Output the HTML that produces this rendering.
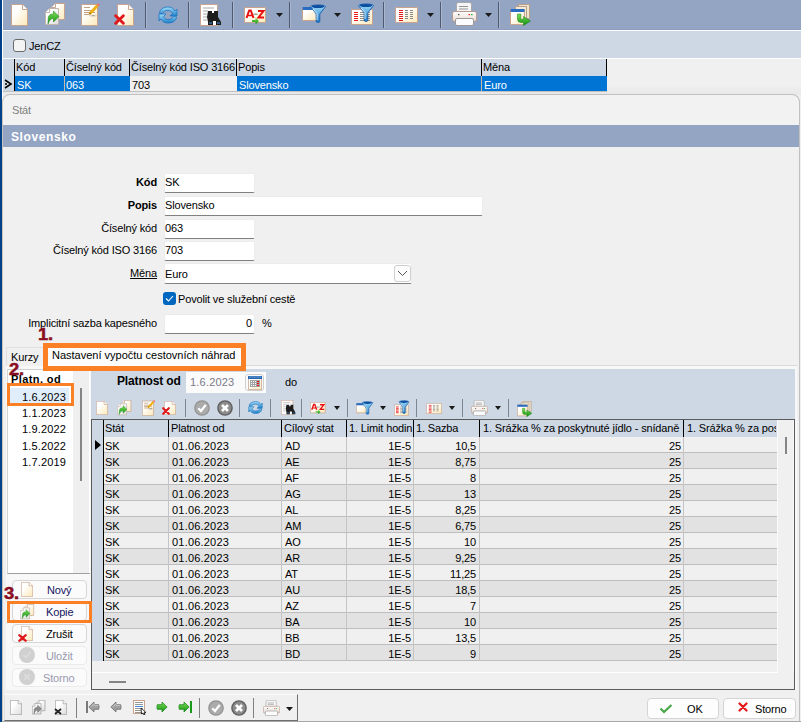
<!DOCTYPE html>
<html><head><meta charset="utf-8">
<style>
*{box-sizing:border-box;margin:0;padding:0}
html,body{width:801px;height:722px;overflow:hidden;background:#f0f0f0;font-family:"Liberation Sans",sans-serif;font-size:11px;color:#000}
.a{position:absolute}
.inp{height:20px;background:#fff;border:1px solid #ececec;border-bottom:1px solid #808080;border-radius:2px}
.btn{left:12px;width:75px;height:19px;border:1px solid #d6d6d6;border-radius:4px;background:#fbfbfb}
.num{font-weight:bold;font-size:17px;line-height:16px;color:#8a0d22;-webkit-text-stroke:0.5px #8a0d22;letter-spacing:0.3px;transform:scaleX(1.08);transform-origin:0 0}
.t{position:absolute;white-space:nowrap;line-height:13px;letter-spacing:-0.15px}
</style></head><body>
<!-- left strip -->
<div class="a" style="left:0;top:0;width:2px;height:722px;background:#00428a"></div>
<div class="a" style="left:2px;top:0;width:1px;height:722px;background:#fff"></div>
<!-- top toolbar -->
<div class="a" style="left:3px;top:0;width:798px;height:30px;background:#94a5c4;border-bottom:1px solid #8b9cbc"></div>
<div class="a" style="left:3px;top:30px;width:798px;height:1px;background:#fff"></div>
<!-- filter bar -->
<div class="a" style="left:3px;top:31px;width:798px;height:27px;background:#ced8e4"></div>
<div class="a" style="left:3px;top:58px;width:798px;height:1px;background:#fff"></div>

<svg width="0" height="0" style="position:absolute">
<defs>
<linearGradient id="pg" x1="0" y1="0" x2="1" y2="1"><stop offset="0.3" stop-color="#ffffff"/><stop offset="1" stop-color="#fde9b8"/></linearGradient>
<linearGradient id="pgg" x1="0" y1="0" x2="1" y2="1"><stop offset="0.3" stop-color="#ffffff"/><stop offset="1" stop-color="#dcdcdc"/></linearGradient>
<linearGradient id="blu" x1="0" y1="0" x2="0" y2="1"><stop offset="0" stop-color="#9fdcf8"/><stop offset="1" stop-color="#1f7fc8"/></linearGradient>
<linearGradient id="grn" x1="0" y1="0" x2="0" y2="1"><stop offset="0" stop-color="#7ee05a"/><stop offset="1" stop-color="#109010"/></linearGradient>
<symbol id="page" viewBox="0 0 17 22"><path d="M0.5 0.5H11.5L16.5 5.5V21.5H0.5Z" fill="url(#pg)" stroke="#c8a48e"/><path d="M11.5 0.5V5.5H16.5" fill="#fff" stroke="#c8a48e"/></symbol>
<symbol id="pagegr" viewBox="0 0 17 22"><path d="M0.5 0.5H11.5L16.5 5.5V21.5H0.5Z" fill="url(#pgg)" stroke="#9a9a9a"/><path d="M11.5 0.5V5.5H16.5" fill="#fff" stroke="#9a9a9a"/></symbol>
<symbol id="redx" viewBox="0 0 10 10"><path d="M1.5 1.5L8.5 8.5M8.5 1.5L1.5 8.5" stroke="#e0181c" stroke-width="2.6" stroke-linecap="round"/></symbol>
<symbol id="copyic" viewBox="0 0 21 23"><path d="M6.5 4.5L10.5 0.5H19.5V16.5H6.5Z" fill="url(#pg)" stroke="#c8a48e"/><path d="M10.5 0.5V4.5H6.5" fill="#fff" stroke="#c8a48e"/><path d="M0.5 9.5L4.5 5.5H13.5V21.5H0.5Z" fill="url(#pgg)" stroke="#c4b4aa"/><path d="M4.5 5.5V9.5H0.5" fill="#fff" stroke="#c4b4aa"/><path d="M3 21L3.3 14.5C3.8 12 5.5 11 8.5 11V8L14 13.5L8.5 19V15.5C6 15.5 4.5 17 3 21Z" fill="url(#grn)" stroke="#0d7d0d" stroke-width="0.5"/></symbol>
<symbol id="chk" viewBox="0 0 16 16"><circle cx="8" cy="8" r="7.8" fill="#909090"/><circle cx="8" cy="8" r="6.6" fill="#ababab"/><path d="M4.3 8.3L7 11L11.8 4.8" fill="none" stroke="#fff" stroke-width="2.2"/></symbol>
<symbol id="xci" viewBox="0 0 16 16"><circle cx="8" cy="8" r="7.8" fill="#5e5e5e"/><circle cx="8" cy="8" r="6.4" fill="#8c8c8c"/><path d="M5 5L11 11M11 5L5 11" stroke="#fff" stroke-width="2.6"/></symbol>
<symbol id="binoc" viewBox="0 0 22 22"><path d="M0.5 0.5H17.5V21.5H0.5Z" fill="#fff" stroke="#c8a48e"/><path d="M3 4H14M3 7H8M3 10H7M3 13H7M3 16H7" stroke="#aaa" stroke-width="1"/><path d="M8 7H12V9H14V7H18V13L21 18V21H16V17H13V21H8V18L7 13Z" fill="#1c1c1c"/><path d="M9 19H12M17 19H20" stroke="#3a6aa0" stroke-width="1.5"/></symbol>
<symbol id="az" viewBox="0 0 24 17"><path d="M0.5 0.5H21.5V15.5H0.5Z" fill="url(#pg)" stroke="#c8a48e"/><path d="M2.5 11L5.2 3.5H6.8L9.5 11" fill="none" stroke="#e81010" stroke-width="2"/><path d="M4 8.5H8" stroke="#e81010" stroke-width="1.5"/><path d="M9.5 7.2H13.5" stroke="#8a8a8a" stroke-width="1.2"/><path d="M14 4H19.5L14.5 10.5H20" fill="none" stroke="#e81010" stroke-width="2"/><path d="M8 13H11.5V10.5L15 14L11.5 17.5V15H8Z" fill="url(#grn)"/></symbol>
<symbol id="filt1" viewBox="0 0 25 21"><path d="M0.5 3.5H14.5V16.5H0.5Z" fill="url(#pg)" stroke="#c8a48e"/><path d="M0.5 3H14.5V6H0.5Z" fill="#2a6cc0"/><g transform="translate(8 0)"><path d="M0.5 2.5C0.5 0.5 15.5 0.5 15.5 2.5L9.8 10V17.8Q8 19.3 6.2 17.8V10Z" fill="url(#blu)" stroke="#1858a8" stroke-width="0.9"/><ellipse cx="8" cy="2.5" rx="6.3" ry="1.6" fill="#0c4ea0"/><path d="M3 5L7 9.5V16" stroke="#e8f8ff" stroke-width="1" fill="none" opacity="0.8"/></g></symbol>
<symbol id="filt2" viewBox="0 0 24 22"><path d="M0.5 6.5H21.5V21.5H0.5Z" fill="url(#pg)" stroke="#c8a48e"/><path d="M3 9.5H7M3 11.5H7M3 13.5H7M3 15.5H7M3 17.5H7" stroke="#f01818" stroke-width="1.2"/><path d="M9 9.5H19M9 11.5H19M9 13.5H19M9 15.5H19M9 17.5H19" stroke="#909090" stroke-width="1"/><g transform="translate(7 0)"><path d="M0.5 2.5C0.5 0.5 15.5 0.5 15.5 2.5L9.8 10V17.8Q8 19.3 6.2 17.8V10Z" fill="url(#blu)" stroke="#1858a8" stroke-width="0.9"/><ellipse cx="8" cy="2.5" rx="6.3" ry="1.6" fill="#0c4ea0"/><path d="M3 5L7 9.5V16" stroke="#e8f8ff" stroke-width="1" fill="none" opacity="0.8"/></g></symbol>
<symbol id="cols" viewBox="0 0 23 16"><path d="M0.5 0.5H22.5V15.5H0.5Z" fill="url(#pg)" stroke="#c8a48e"/><path d="M4 3.5H8M4 5.5H8M4 7.5H8M4 9.5H8M4 11.5H8M4 13.5H8" stroke="#e01818" stroke-width="1"/><path d="M10 3.5H13M10 5.5H13M10 7.5H13M10 9.5H13M10 11.5H13M15 3.5H18M15 5.5H18M15 7.5H18M15 9.5H18M15 11.5H18" stroke="#888" stroke-width="1"/></symbol>
<symbol id="prn" viewBox="0 0 25 24"><linearGradient id="prb" x1="0" y1="0" x2="0" y2="1"><stop offset="0" stop-color="#ffffff"/><stop offset="1" stop-color="#e6d8ce"/></linearGradient><path d="M4.5 10V2.5Q4.5 0.5 6.5 0.5H17.5Q19.5 0.5 19.5 2.5V10Z" fill="#f6f6f6" stroke="#a8a8a8"/><path d="M7 4.5H16M7 7H16" stroke="#8a8a8a" stroke-width="0.9"/><rect x="0.5" y="9.5" width="24" height="10" rx="2" fill="url(#prb)" stroke="#b8988a"/><rect x="3.5" y="16.5" width="18" height="7" rx="1.5" fill="#fcfcfc" stroke="#9a9a9a"/><rect x="6" y="12" width="1.5" height="1.2" fill="#555"/><rect x="16.5" y="12" width="1.6" height="1.2" fill="#e03030"/><rect x="19" y="12" width="1.6" height="1.2" fill="#20c040"/></symbol>
<symbol id="win" viewBox="0 0 22 22"><path d="M8.5 0.5H19.5V14.5H8.5Z" fill="#efe4d0" stroke="#b8a088"/><path d="M5.5 2.5H16.5V16.5H5.5Z" fill="#f4ead8" stroke="#b8a088"/><path d="M0.5 5.5H14.5V20.5H0.5Z" fill="url(#pg)" stroke="#c8a48e"/><path d="M0.5 5H14.5V8H0.5Z" fill="#2a6cc0"/><path d="M7.5 10V15Q7.5 18.5 11 18.5H13.5V21.5L20.5 17L13.5 12.5V15.3H11.5Q10.8 15.3 10.8 14.5V10Z" fill="url(#grn)" stroke="#0e7e0e" stroke-width="0.5"/></symbol>
<symbol id="refr" viewBox="0 0 20 20"><path d="M1.5 8C2 4 5.5 2 10 2C14 2 16 4 17 6L19 4V11H12L14.5 8.5C13.5 6.5 12 5.5 10 5.5C7 5.5 5 7 4 9Z" fill="url(#blu)" stroke="#1c74c0" stroke-width="0.8"/><path d="M18.5 12C18 16 14.5 18 10 18C6 18 4 16 3 14L1 16V9H8L5.5 11.5C6.5 13.5 8 14.5 10 14.5C13 14.5 15 13 16 11Z" fill="url(#blu)" stroke="#1c74c0" stroke-width="0.8"/></symbol>
<symbol id="edit" viewBox="0 0 20 23"><path d="M0.5 1.5H16.5V22.5H0.5Z" fill="url(#pg)" stroke="#c8a48e"/><path d="M3 4.5H9M3 7.5H14M3 9.5H14M3 11.5H8" stroke="#c0a080" stroke-width="1.2"/><path d="M8 12.5L13 13.5L15.5 12" stroke="#d8d0c8" stroke-width="1.5" opacity="0.7"/><path d="M8.5 11L16.5 2.5" stroke="#f0b010" stroke-width="2.8"/><path d="M8.3 11.2L9.5 10" stroke="#806020" stroke-width="1.2"/><circle cx="17.3" cy="1.8" r="1.3" fill="#f07070"/></symbol>
<symbol id="copygr" viewBox="0 0 21 23"><path d="M6.5 4.5L10.5 0.5H19.5V16.5H6.5Z" fill="url(#pgg)" stroke="#9a9a9a"/><path d="M10.5 0.5V4.5H6.5" fill="#fff" stroke="#9a9a9a"/><path d="M0.5 9.5L4.5 5.5H13.5V21.5H0.5Z" fill="url(#pgg)" stroke="#9a9a9a"/><path d="M4.5 5.5V9.5H0.5" fill="#fff" stroke="#9a9a9a"/><path d="M3 21L3.3 14.5C3.8 12 5.5 11 8.5 11V8L14 13.5L8.5 19V15.5C6 15.5 4.5 17 3 21Z" fill="#8a8a8a" stroke="#555" stroke-width="0.6"/></symbol>
<symbol id="navl" viewBox="0 0 14 14"><path d="M1 7L7 1.2V4.3H12.5Q13.3 7 12.5 9.7H7V12.8Z" fill="#a0a0a0" stroke="#6a6a6a" stroke-width="0.9" stroke-linejoin="round"/><path d="M3 7L7 3.3V5.2H12" stroke="#d8d8d8" stroke-width="0.8" fill="none"/></symbol>
<symbol id="navr" viewBox="0 0 14 14"><path d="M13 7L7 1.2V4.3H1.5Q0.7 7 1.5 9.7H7V12.8Z" fill="url(#grn)" stroke="#1a8a1a" stroke-width="0.9" stroke-linejoin="round"/></symbol>
<symbol id="darr" viewBox="0 0 7 4"><path d="M0 0H7L3.5 4Z" fill="#1a1a1a"/></symbol>
</defs></svg>
<!-- toolbar icons -->
<svg class="a" style="left:11px;top:4px" width="17" height="22"><use href="#page"/></svg>
<svg class="a" style="left:45px;top:3px" width="21" height="23" viewBox="0 0 21 23"><path d="M6.5 4.5L10.5 0.5H19.5V16.5H6.5Z" fill="url(#pg)" stroke="#c8a48e"/><path d="M10.5 0.5V4.5H6.5" fill="#fff" stroke="#c8a48e"/><path d="M0.5 9.5L4.5 5.5H13.5V21.5H0.5Z" fill="url(#pgg)" stroke="#c4b4aa"/><path d="M4.5 5.5V9.5H0.5" fill="#fff" stroke="#c4b4aa"/><path d="M3 21L3.3 14.5C3.8 12 5.5 11 8.5 11V8L14 13.5L8.5 19V15.5C6 15.5 4.5 17 3 21Z" fill="url(#grn)" stroke="#0d7d0d" stroke-width="0.5"/></svg>
<svg class="a" style="left:81px;top:3px" width="20" height="23"><use href="#edit"/></svg>
<svg class="a" style="left:117px;top:4px" width="17" height="22"><use href="#page"/></svg>
<svg class="a" style="left:114px;top:14px" width="11" height="11"><use href="#redx"/></svg>
<div class="a" style="left:145px;top:2px;width:1px;height:26px;background:#4f5a72;box-shadow:1px 0 0 #aab6cc"></div>
<svg class="a" style="left:158px;top:5px" width="20" height="20"><use href="#refr"/></svg>
<div class="a" style="left:188px;top:2px;width:1px;height:26px;background:#4f5a72;box-shadow:1px 0 0 #aab6cc"></div>
<svg class="a" style="left:200px;top:4px" width="22" height="22"><use href="#binoc"/></svg>
<div class="a" style="left:232px;top:2px;width:1px;height:26px;background:#4f5a72;box-shadow:1px 0 0 #aab6cc"></div>
<svg class="a" style="left:244px;top:7px" width="24" height="17"><use href="#az"/></svg>
<svg class="a" style="left:276px;top:13px" width="7" height="4"><use href="#darr"/></svg>
<div class="a" style="left:289px;top:2px;width:1px;height:26px;background:#4f5a72;box-shadow:1px 0 0 #aab6cc"></div>
<svg class="a" style="left:302px;top:4px" width="25" height="21"><use href="#filt1"/></svg>
<svg class="a" style="left:334px;top:13px" width="7" height="4"><use href="#darr"/></svg>
<svg class="a" style="left:351px;top:3px" width="24" height="22"><use href="#filt2"/></svg>
<div class="a" style="left:383px;top:2px;width:1px;height:26px;background:#4f5a72;box-shadow:1px 0 0 #aab6cc"></div>
<svg class="a" style="left:395px;top:7px" width="23" height="16"><use href="#cols"/></svg>
<svg class="a" style="left:427px;top:13px" width="7" height="4"><use href="#darr"/></svg>
<div class="a" style="left:440px;top:2px;width:1px;height:26px;background:#4f5a72;box-shadow:1px 0 0 #aab6cc"></div>
<svg class="a" style="left:452px;top:2px" width="25" height="24"><use href="#prn"/></svg>
<svg class="a" style="left:485px;top:13px" width="7" height="4"><use href="#darr"/></svg>
<div class="a" style="left:498px;top:2px;width:1px;height:26px;background:#4f5a72;box-shadow:1px 0 0 #aab6cc"></div>
<svg class="a" style="left:510px;top:4px" width="22" height="22"><use href="#win"/></svg>
<!-- filter bar -->
<div class="a" style="left:13px;top:39px;width:13px;height:13px;background:#f4f4f4;border:1px solid #6a6a6a;border-radius:3px"></div>
<div class="t" style="left:29px;top:40px">JenCZ</div>

<!-- upper grid -->
<div class="a" style="left:3px;top:59px;width:798px;height:36px;background:linear-gradient(#f0f0f0 70%,#e8e8e8)"></div>
<div class="a" style="left:3px;top:59px;width:604px;height:17px;background:#ced8e4"></div>
<div class="a" style="left:3px;top:76px;width:12px;height:16px;background:#ced8e4"></div>
<div class="a" style="left:15px;top:76px;width:115px;height:15px;background:#0074d4"></div>
<div class="a" style="left:130px;top:76px;width:107px;height:15px;background:#f0f0f0"></div>
<div class="a" style="left:237px;top:76px;width:370px;height:15px;background:#0074d4"></div>
<div class="a" style="left:14px;top:59px;width:1px;height:33px;background:#000"></div>
<div class="a" style="left:64px;top:59px;width:1px;height:17px;background:#000"></div>
<div class="a" style="left:129px;top:59px;width:1px;height:17px;background:#000"></div>
<div class="a" style="left:236px;top:59px;width:1px;height:17px;background:#000"></div>
<div class="a" style="left:481px;top:59px;width:1px;height:17px;background:#000"></div>
<div class="a" style="left:606px;top:59px;width:1px;height:17px;background:#000"></div>
<div class="a" style="left:64px;top:76px;width:1px;height:15px;background:#c8b8a8"></div>
<div class="a" style="left:481px;top:76px;width:1px;height:15px;background:#c8b8a8"></div>
<div class="a" style="left:3px;top:91px;width:604px;height:1px;background:#c0c0c0"></div>
<svg class="a" style="left:4px;top:79px" width="9" height="10" viewBox="0 0 9 10"><path d="M1 1L7 5L1 9" fill="none" stroke="#000" stroke-width="1.6"/><circle cx="2" cy="5" r="1" fill="#000"/></svg>
<div class="t" style="left:16px;top:61px">Kód</div>
<div class="t" style="left:66px;top:61px">Číselný kód</div>
<div class="t" style="left:131px;top:61px">Číselný kód ISO 3166</div>
<div class="t" style="left:238px;top:61px">Popis</div>
<div class="t" style="left:483px;top:61px">Měna</div>
<div class="t" style="left:17px;top:79px;color:#fff">SK</div>
<div class="t" style="left:66px;top:79px;color:#fff">063</div>
<div class="t" style="left:132px;top:79px">703</div>
<div class="t" style="left:239px;top:79px;color:#fff">Slovensko</div>
<div class="t" style="left:484px;top:79px;color:#fff">Euro</div>

<!-- panel -->
<div class="a" style="left:2px;top:94px;width:798px;height:628px;background:#f2f2f2;border:1px solid #c0c0c0;border-left-color:#c8c4c0;border-radius:8px 8px 0 0"></div>
<div class="t" style="left:12px;top:104px;color:#808080">Stát</div>
<div class="a" style="left:3px;top:125px;width:796px;height:22px;background:#94a5c4"></div>
<div class="a" style="left:3px;top:147px;width:796px;height:574px;background:#f0f0f0"></div>
<div class="t" style="left:11px;top:131px;color:#fff;font-weight:bold;font-size:12px;letter-spacing:0.6px">Slovensko</div>



<!-- tabs -->
<div class="a" style="left:6px;top:365px;width:791px;height:1px;background:#dadada"></div>
<div class="a" style="left:6px;top:347px;width:38px;height:19px;background:#f0f0f0;border:1px solid #e0e0e0;border-bottom:none"></div>
<div class="t" style="left:11px;top:351px">Kurzy</div>
<div class="a" style="left:48px;top:348px;width:193px;height:18px;background:#fcfcfc"></div>
<div class="t" style="left:52px;top:349px;letter-spacing:0">Nastavení vypočtu cestovních náhrad</div>
<div class="a" style="left:6px;top:366px;width:791px;height:324px;background:#f8f8f8"></div>
<!-- list -->
<div class="a" style="left:7px;top:369px;width:83px;height:205px;background:#fff;border-left:1px solid #d4d4d4;border-top:1px solid #d0d0d0;border-bottom:1px solid #a0a0a0"></div>
<div class="a" style="left:73px;top:370px;width:16px;height:203px;background:#efefef"></div>
<div class="a" style="left:80px;top:388px;width:2px;height:93px;background:#858585"></div>
<div class="t" style="left:11px;top:373px;font-weight:bold;letter-spacing:0.4px">Platn. od</div>
<div class="a" style="left:10px;top:388px;width:59px;height:15px;background:#e0eefb"></div>
<div class="t" style="right:735px;letter-spacing:0.15px;top:391px">1.6.2023</div>
<div class="t" style="right:735px;letter-spacing:0.15px;top:407px">1.1.2023</div>
<div class="t" style="right:735px;letter-spacing:0.15px;top:423px">1.9.2022</div>
<div class="t" style="right:735px;letter-spacing:0.15px;top:440px">1.5.2022</div>
<div class="t" style="right:735px;letter-spacing:0.15px;top:456px">1.7.2019</div>
<!-- buttons -->
<div class="a btn" style="top:580px"></div>
<div class="a btn" style="top:602px"></div>
<div class="a btn" style="top:624px"></div>
<div class="a btn" style="top:646px;border-color:#ebebeb"></div>
<div class="a btn" style="top:668px;border-color:#ebebeb"></div>
<svg class="a" style="left:21px;top:582px" width="12" height="15" viewBox="0 0 17 22" preserveAspectRatio="none"><use href="#page"/></svg>
<svg class="a" style="left:20px;top:604px" width="15" height="16" viewBox="0 0 21 23"><use href="#copyic"/></svg>
<svg class="a" style="left:21px;top:626px" width="12" height="15" viewBox="0 0 17 22" preserveAspectRatio="none"><use href="#page"/></svg>
<svg class="a" style="left:18px;top:634px" width="9" height="8" viewBox="0 0 10 10" preserveAspectRatio="none"><use href="#redx"/></svg>
<svg class="a" style="left:19px;top:647px" width="16" height="16" viewBox="0 0 16 16"><circle cx="8" cy="8" r="8" fill="#d0d0d0"/><path d="M4.5 8L7 10.5L11.5 5" fill="none" stroke="#dcdcdc" stroke-width="1.8"/></svg>
<svg class="a" style="left:19px;top:669px" width="16" height="16" viewBox="0 0 16 16"><circle cx="8" cy="8" r="8" fill="#d0d0d0"/><path d="M5.3 5.3L10.7 10.7M10.7 5.3L5.3 10.7" stroke="#dcdcdc" stroke-width="2"/></svg>
<div class="t" style="left:47px;top:584px;color:#151560">Nový</div>
<div class="t" style="left:46px;top:606px;color:#151560">Kopie</div>
<div class="t" style="left:46px;top:628px">Zrušit</div>
<div class="t" style="left:46px;top:650px;color:#9a9ab0">Uložit</div>
<div class="t" style="left:43px;top:672px;color:#9a9ab0">Storno</div>
<!-- right panel -->
<div class="a" style="left:91px;top:369px;width:704px;height:51px;background:#ced8e4"></div>
<div class="t" style="left:117px;top:375px;font-weight:bold;font-size:12px">Platnost od</div>
<div class="a" style="left:186px;top:372px;width:80px;height:21px;background:#fbfbfb"></div>
<div class="t" style="left:190px;top:376px;color:#7a7a8a;letter-spacing:0.2px">1.6.2023</div>
<div class="a" style="left:245px;top:374px;width:19px;height:17px;border:1px solid #cfcfcf;border-radius:3px;background:#fafafa"></div>
<svg class="a" style="left:248px;top:376px" width="14" height="14" viewBox="0 0 14 14"><rect x="0.5" y="0.5" width="13" height="13" fill="url(#pg)" stroke="#d4b8a8"/><rect x="0" y="0" width="14" height="3" fill="#2266b4"/><rect x="1" y="0.5" width="12" height="1" fill="#6a9ad0"/><rect x="2" y="4" width="10" height="7" fill="#a4a4a4"/><path d="M3 5.5H4M5 5.5H6M7 5.5H8M3 7.5H4M5 7.5H6M7 7.5H8M3 9.5H4M5 9.5H6M7 9.5H8" stroke="#fff" stroke-width="1"/><path d="M9 5.5H11M9 7.5H11M9 9.5H11" stroke="#ee1010" stroke-width="1"/></svg>
<div class="t" style="left:285px;top:376px">do</div>
<svg class="a" style="left:96px;top:401px" width="12" height="14" viewBox="0 0 17 22" preserveAspectRatio="none"><use href="#page"/></svg>
<svg class="a" style="left:117px;top:400px" width="15" height="16" viewBox="0 0 21 23" preserveAspectRatio="none"><use href="#copyic"/></svg>
<svg class="a" style="left:142px;top:400px" width="14" height="16" viewBox="0 0 20 23" preserveAspectRatio="none"><use href="#edit"/></svg>
<svg class="a" style="left:164px;top:401px" width="12" height="14" viewBox="0 0 17 22" preserveAspectRatio="none"><use href="#page"/></svg>
<svg class="a" style="left:162px;top:407px" width="8" height="8" viewBox="0 0 10 10" preserveAspectRatio="none"><use href="#redx"/></svg>
<div class="a" style="left:185px;top:399px;width:1px;height:18px;background:#7a8494"></div>
<svg class="a" style="left:194px;top:400px" width="16" height="16" viewBox="0 0 16 16" preserveAspectRatio="none"><use href="#chk"/></svg>
<svg class="a" style="left:217px;top:400px" width="16" height="16" viewBox="0 0 16 16" preserveAspectRatio="none"><use href="#xci"/></svg>
<div class="a" style="left:239px;top:399px;width:1px;height:18px;background:#7a8494"></div>
<svg class="a" style="left:248px;top:400px" width="15" height="15" viewBox="0 0 20 20" preserveAspectRatio="none"><use href="#refr"/></svg>
<div class="a" style="left:270px;top:399px;width:1px;height:18px;background:#7a8494"></div>
<svg class="a" style="left:281px;top:400px" width="15" height="15" viewBox="0 0 22 22" preserveAspectRatio="none"><use href="#binoc"/></svg>
<div class="a" style="left:301px;top:399px;width:1px;height:18px;background:#7a8494"></div>
<svg class="a" style="left:310px;top:402px" width="17" height="12" viewBox="0 0 24 17" preserveAspectRatio="none"><use href="#az"/></svg>
<svg class="a" style="left:334px;top:406px" width="6" height="4" viewBox="0 0 7 4" preserveAspectRatio="none"><use href="#darr"/></svg>
<div class="a" style="left:347px;top:399px;width:1px;height:18px;background:#7a8494"></div>
<svg class="a" style="left:356px;top:401px" width="18" height="15" viewBox="0 0 25 21" preserveAspectRatio="none"><use href="#filt1"/></svg>
<svg class="a" style="left:380px;top:406px" width="6" height="4" viewBox="0 0 7 4" preserveAspectRatio="none"><use href="#darr"/></svg>
<svg class="a" style="left:394px;top:400px" width="16" height="16" viewBox="0 0 24 22" preserveAspectRatio="none"><use href="#filt2"/></svg>
<div class="a" style="left:416px;top:399px;width:1px;height:18px;background:#7a8494"></div>
<svg class="a" style="left:426px;top:403px" width="16" height="11" viewBox="0 0 23 16" preserveAspectRatio="none"><use href="#cols"/></svg>
<svg class="a" style="left:449px;top:406px" width="6" height="4" viewBox="0 0 7 4" preserveAspectRatio="none"><use href="#darr"/></svg>
<div class="a" style="left:462px;top:399px;width:1px;height:18px;background:#7a8494"></div>
<svg class="a" style="left:471px;top:400px" width="17" height="16" viewBox="0 0 25 24" preserveAspectRatio="none"><use href="#prn"/></svg>
<svg class="a" style="left:495px;top:406px" width="6" height="4" viewBox="0 0 7 4" preserveAspectRatio="none"><use href="#darr"/></svg>
<div class="a" style="left:508px;top:399px;width:1px;height:18px;background:#7a8494"></div>
<svg class="a" style="left:517px;top:401px" width="16" height="16" viewBox="0 0 22 22" preserveAspectRatio="none"><use href="#win"/></svg>
<!-- grid -->
<div class="a" style="left:91px;top:419px;width:704px;height:271px;border:1px solid #5a5a5a;background:#f0f0f0"></div>
<div class="a" style="left:92px;top:420px;width:685px;height:17px;background:#ced8e4"></div>
<div class="a" style="left:92px;top:437px;width:11px;height:224px;background:#ced8e4"></div>
<div class="a" style="left:103px;top:420px;width:1px;height:241px;background:#000"></div>
<svg class="a" style="left:95px;top:440px" width="6" height="10" viewBox="0 0 6 10"><path d="M0 0L6 5L0 10Z" fill="#000"/></svg>
<div class="t" style="left:105px;top:422px">Stát</div>
<div class="t" style="left:171px;top:422px">Platnost od</div>
<div class="t" style="left:284px;top:422px">Cílový stat</div>
<div class="t" style="left:349px;top:422px">1. Limit hodin</div>
<div class="t" style="left:416px;top:422px">1. Sazba</div>
<div class="t" style="left:483px;top:422px">1. Srážka % za poskytnuté jídlo - snídaně</div>
<div class="t" style="left:687px;top:422px;width:89px;overflow:hidden">1. Srážka % za poskytnuté jídlo - oběd</div>
<div class="a" style="left:104px;top:437px;width:673px;height:15px;background:#f0f0f0"></div>
<div class="a" style="left:104px;top:452px;width:673px;height:1px;background:#bdbdbd"></div>
<div class="t" style="left:105px;top:440px">SK</div>
<div class="t" style="left:172px;letter-spacing:0.2px;top:440px">01.06.2023</div>
<div class="t" style="left:285px;top:440px">AD</div>
<div class="t" style="right:390px;top:440px">1E-5</div>
<div class="t" style="right:325px;top:440px">10,5</div>
<div class="t" style="right:120px;top:440px">25</div>
<div class="a" style="left:104px;top:453px;width:673px;height:15px;background:#e2e2e2"></div>
<div class="a" style="left:104px;top:468px;width:673px;height:1px;background:#bdbdbd"></div>
<div class="t" style="left:105px;top:456px">SK</div>
<div class="t" style="left:172px;letter-spacing:0.2px;top:456px">01.06.2023</div>
<div class="t" style="left:285px;top:456px">AE</div>
<div class="t" style="right:390px;top:456px">1E-5</div>
<div class="t" style="right:325px;top:456px">8,75</div>
<div class="t" style="right:120px;top:456px">25</div>
<div class="a" style="left:104px;top:469px;width:673px;height:15px;background:#f0f0f0"></div>
<div class="a" style="left:104px;top:484px;width:673px;height:1px;background:#bdbdbd"></div>
<div class="t" style="left:105px;top:472px">SK</div>
<div class="t" style="left:172px;letter-spacing:0.2px;top:472px">01.06.2023</div>
<div class="t" style="left:285px;top:472px">AF</div>
<div class="t" style="right:390px;top:472px">1E-5</div>
<div class="t" style="right:325px;top:472px">8</div>
<div class="t" style="right:120px;top:472px">25</div>
<div class="a" style="left:104px;top:485px;width:673px;height:15px;background:#e2e2e2"></div>
<div class="a" style="left:104px;top:500px;width:673px;height:1px;background:#bdbdbd"></div>
<div class="t" style="left:105px;top:488px">SK</div>
<div class="t" style="left:172px;letter-spacing:0.2px;top:488px">01.06.2023</div>
<div class="t" style="left:285px;top:488px">AG</div>
<div class="t" style="right:390px;top:488px">1E-5</div>
<div class="t" style="right:325px;top:488px">13</div>
<div class="t" style="right:120px;top:488px">25</div>
<div class="a" style="left:104px;top:501px;width:673px;height:15px;background:#f0f0f0"></div>
<div class="a" style="left:104px;top:516px;width:673px;height:1px;background:#bdbdbd"></div>
<div class="t" style="left:105px;top:504px">SK</div>
<div class="t" style="left:172px;letter-spacing:0.2px;top:504px">01.06.2023</div>
<div class="t" style="left:285px;top:504px">AL</div>
<div class="t" style="right:390px;top:504px">1E-5</div>
<div class="t" style="right:325px;top:504px">8,25</div>
<div class="t" style="right:120px;top:504px">25</div>
<div class="a" style="left:104px;top:517px;width:673px;height:15px;background:#e2e2e2"></div>
<div class="a" style="left:104px;top:532px;width:673px;height:1px;background:#bdbdbd"></div>
<div class="t" style="left:105px;top:520px">SK</div>
<div class="t" style="left:172px;letter-spacing:0.2px;top:520px">01.06.2023</div>
<div class="t" style="left:285px;top:520px">AM</div>
<div class="t" style="right:390px;top:520px">1E-5</div>
<div class="t" style="right:325px;top:520px">6,75</div>
<div class="t" style="right:120px;top:520px">25</div>
<div class="a" style="left:104px;top:533px;width:673px;height:15px;background:#f0f0f0"></div>
<div class="a" style="left:104px;top:548px;width:673px;height:1px;background:#bdbdbd"></div>
<div class="t" style="left:105px;top:536px">SK</div>
<div class="t" style="left:172px;letter-spacing:0.2px;top:536px">01.06.2023</div>
<div class="t" style="left:285px;top:536px">AO</div>
<div class="t" style="right:390px;top:536px">1E-5</div>
<div class="t" style="right:325px;top:536px">10</div>
<div class="t" style="right:120px;top:536px">25</div>
<div class="a" style="left:104px;top:549px;width:673px;height:15px;background:#e2e2e2"></div>
<div class="a" style="left:104px;top:564px;width:673px;height:1px;background:#bdbdbd"></div>
<div class="t" style="left:105px;top:552px">SK</div>
<div class="t" style="left:172px;letter-spacing:0.2px;top:552px">01.06.2023</div>
<div class="t" style="left:285px;top:552px">AR</div>
<div class="t" style="right:390px;top:552px">1E-5</div>
<div class="t" style="right:325px;top:552px">9,25</div>
<div class="t" style="right:120px;top:552px">25</div>
<div class="a" style="left:104px;top:565px;width:673px;height:15px;background:#f0f0f0"></div>
<div class="a" style="left:104px;top:580px;width:673px;height:1px;background:#bdbdbd"></div>
<div class="t" style="left:105px;top:568px">SK</div>
<div class="t" style="left:172px;letter-spacing:0.2px;top:568px">01.06.2023</div>
<div class="t" style="left:285px;top:568px">AT</div>
<div class="t" style="right:390px;top:568px">1E-5</div>
<div class="t" style="right:325px;top:568px">11,25</div>
<div class="t" style="right:120px;top:568px">25</div>
<div class="a" style="left:104px;top:581px;width:673px;height:15px;background:#e2e2e2"></div>
<div class="a" style="left:104px;top:596px;width:673px;height:1px;background:#bdbdbd"></div>
<div class="t" style="left:105px;top:584px">SK</div>
<div class="t" style="left:172px;letter-spacing:0.2px;top:584px">01.06.2023</div>
<div class="t" style="left:285px;top:584px">AU</div>
<div class="t" style="right:390px;top:584px">1E-5</div>
<div class="t" style="right:325px;top:584px">18,5</div>
<div class="t" style="right:120px;top:584px">25</div>
<div class="a" style="left:104px;top:597px;width:673px;height:15px;background:#f0f0f0"></div>
<div class="a" style="left:104px;top:612px;width:673px;height:1px;background:#bdbdbd"></div>
<div class="t" style="left:105px;top:600px">SK</div>
<div class="t" style="left:172px;letter-spacing:0.2px;top:600px">01.06.2023</div>
<div class="t" style="left:285px;top:600px">AZ</div>
<div class="t" style="right:390px;top:600px">1E-5</div>
<div class="t" style="right:325px;top:600px">7</div>
<div class="t" style="right:120px;top:600px">25</div>
<div class="a" style="left:104px;top:613px;width:673px;height:15px;background:#e2e2e2"></div>
<div class="a" style="left:104px;top:628px;width:673px;height:1px;background:#bdbdbd"></div>
<div class="t" style="left:105px;top:616px">SK</div>
<div class="t" style="left:172px;letter-spacing:0.2px;top:616px">01.06.2023</div>
<div class="t" style="left:285px;top:616px">BA</div>
<div class="t" style="right:390px;top:616px">1E-5</div>
<div class="t" style="right:325px;top:616px">10</div>
<div class="t" style="right:120px;top:616px">25</div>
<div class="a" style="left:104px;top:629px;width:673px;height:15px;background:#f0f0f0"></div>
<div class="a" style="left:104px;top:644px;width:673px;height:1px;background:#bdbdbd"></div>
<div class="t" style="left:105px;top:632px">SK</div>
<div class="t" style="left:172px;letter-spacing:0.2px;top:632px">01.06.2023</div>
<div class="t" style="left:285px;top:632px">BB</div>
<div class="t" style="right:390px;top:632px">1E-5</div>
<div class="t" style="right:325px;top:632px">13,5</div>
<div class="t" style="right:120px;top:632px">25</div>
<div class="a" style="left:104px;top:645px;width:673px;height:15px;background:#e2e2e2"></div>
<div class="a" style="left:104px;top:660px;width:673px;height:1px;background:#bdbdbd"></div>
<div class="t" style="left:105px;top:648px">SK</div>
<div class="t" style="left:172px;letter-spacing:0.2px;top:648px">01.06.2023</div>
<div class="t" style="left:285px;top:648px">BD</div>
<div class="t" style="right:390px;top:648px">1E-5</div>
<div class="t" style="right:325px;top:648px">9</div>
<div class="t" style="right:120px;top:648px">25</div>
<div class="a" style="left:168px;top:437px;width:1px;height:224px;background:#c4c4c4"></div>
<div class="a" style="left:168px;top:420px;width:1px;height:17px;background:#000"></div>
<div class="a" style="left:281px;top:437px;width:1px;height:224px;background:#c4c4c4"></div>
<div class="a" style="left:281px;top:420px;width:1px;height:17px;background:#000"></div>
<div class="a" style="left:346px;top:437px;width:1px;height:224px;background:#c4c4c4"></div>
<div class="a" style="left:346px;top:420px;width:1px;height:17px;background:#000"></div>
<div class="a" style="left:413px;top:437px;width:1px;height:224px;background:#c4c4c4"></div>
<div class="a" style="left:413px;top:420px;width:1px;height:17px;background:#000"></div>
<div class="a" style="left:479px;top:437px;width:1px;height:224px;background:#c4c4c4"></div>
<div class="a" style="left:479px;top:420px;width:1px;height:17px;background:#000"></div>
<div class="a" style="left:683px;top:437px;width:1px;height:224px;background:#c4c4c4"></div>
<div class="a" style="left:683px;top:420px;width:1px;height:17px;background:#000"></div>
<div class="a" style="left:777px;top:420px;width:17px;height:253px;background:#f0f0f0;border-left:1px solid #fafafa;border-right:1px solid #fafafa"></div>
<div class="a" style="left:785px;top:437px;width:2px;height:17px;background:#858585"></div>
<div class="a" style="left:92px;top:672px;width:686px;height:1px;background:#fff"></div>
<div class="a" style="left:109px;top:681px;width:17px;height:2px;background:#858585"></div>

<!-- form -->
<div class="t" style="right:644px;top:176px;font-weight:bold">Kód</div>
<div class="t" style="right:644px;top:199px;font-weight:bold">Popis</div>
<div class="t" style="right:644px;top:222px">Číselný kód</div>
<div class="t" style="right:644px;top:244px">Číselný kód ISO 3166</div>
<div class="t" style="right:644px;top:267px;text-decoration:underline">Měna</div>
<div class="t" style="right:644px;top:317px">Implicitní sazba kapesného</div>
<div class="a inp" style="left:164px;top:173px;width:91px"></div>
<div class="a inp" style="left:164px;top:196px;width:319px"></div>
<div class="a inp" style="left:164px;top:219px;width:91px"></div>
<div class="a inp" style="left:164px;top:241px;width:91px"></div>
<div class="a inp" style="left:164px;top:263px;width:248px;height:21px"></div>
<div class="a inp" style="left:164px;top:314px;width:91px"></div>
<div class="t" style="left:165px;top:176px">SK</div>
<div class="t" style="left:165px;top:199px">Slovensko</div>
<div class="t" style="left:165px;top:222px">063</div>
<div class="t" style="left:165px;top:244px">703</div>
<div class="t" style="left:165px;top:268px">Euro</div>
<div class="t" style="left:246px;top:317px">0</div>
<div class="t" style="left:262px;top:317px">%</div>
<div class="a" style="left:394px;top:265px;width:17px;height:17px;border:1px solid #d0d0d0;border-radius:3px;background:#fdfdfd"></div>
<svg class="a" style="left:397px;top:270px" width="11" height="7" viewBox="0 0 11 7"><path d="M1 1L5.5 5.5L10 1" fill="none" stroke="#555" stroke-width="1"/></svg>
<div class="a" style="left:163px;top:292px;width:13px;height:13px;background:#0067c0;border-radius:3px"></div>
<svg class="a" style="left:163px;top:292px" width="13" height="13" viewBox="0 0 13 13"><path d="M3 6.5L5.5 9L10 4" fill="none" stroke="#fff" stroke-width="1.1"/></svg>
<div class="t" style="left:178px;top:293px">Povolit ve služební cestě</div>
<div class="a" style="left:3px;top:721px;width:798px;height:1px;background:#a8a8a8"></div>
<div class="a" style="left:4px;top:694px;width:294px;height:27px;background:#f0f0f0;border-left:1px solid #e4e4e4;border-top:1px solid #fcfcfc;border-right:1px solid #6e6e6e;border-bottom:1px solid #6e6e6e"></div>
<svg class="a" style="left:10px;top:700px" width="12" height="15" viewBox="0 0 17 22" preserveAspectRatio="none"><use href="#pagegr"/></svg>
<svg class="a" style="left:32px;top:700px" width="14" height="15" viewBox="0 0 21 23" preserveAspectRatio="none"><use href="#copygr"/></svg>
<svg class="a" style="left:55px;top:700px" width="12" height="15" viewBox="0 0 17 22" preserveAspectRatio="none"><use href="#pagegr"/></svg>
<svg class="a" style="left:54px;top:708px" width="8" height="7" viewBox="0 0 8 7"><path d="M1 1L7 6M7 1L1 6" stroke="#222" stroke-width="1.8"/></svg>
<div class="a" style="left:76px;top:698px;width:1px;height:20px;background:#808080"></div>
<div class="a" style="left:86px;top:701px;width:2px;height:12px;background:#7a7a7a"></div>
<svg class="a" style="left:88px;top:701px" width="12" height="12" viewBox="0 0 14 14" preserveAspectRatio="none"><use href="#navl"/></svg>
<svg class="a" style="left:110px;top:701px" width="12" height="12" viewBox="0 0 14 14" preserveAspectRatio="none"><use href="#navl"/></svg>
<svg class="a" style="left:133px;top:700px" width="14" height="15" viewBox="0 0 14 15"><rect x="0.5" y="0.5" width="11" height="13" fill="#fff" stroke="#c8a48e"/><path d="M2 2.5H10M2 4.5H10M2 8.5H10M2 10.5H8M2 12.5H8" stroke="#8a8a8a" stroke-width="0.9"/><path d="M2 6.5H10" stroke="#3a8ae0" stroke-width="1"/><path d="M8 8L13 12.5L11 12.8L12 14.5L11 15L10 13L8.5 14Z" fill="#fff" stroke="#000" stroke-width="0.8"/></svg>
<svg class="a" style="left:156px;top:701px" width="12" height="12" viewBox="0 0 14 14" preserveAspectRatio="none"><use href="#navr"/></svg>
<svg class="a" style="left:178px;top:701px" width="12" height="12" viewBox="0 0 14 14" preserveAspectRatio="none"><use href="#navr"/></svg>
<div class="a" style="left:190px;top:701px;width:2px;height:12px;background:#1a9a1a"></div>
<div class="a" style="left:199px;top:698px;width:1px;height:20px;background:#808080"></div>
<svg class="a" style="left:208px;top:700px" width="16" height="16" viewBox="0 0 16 16" preserveAspectRatio="none"><use href="#chk"/></svg>
<svg class="a" style="left:231px;top:700px" width="16" height="16" viewBox="0 0 16 16" preserveAspectRatio="none"><use href="#xci"/></svg>
<div class="a" style="left:253px;top:698px;width:1px;height:20px;background:#808080"></div>
<svg class="a" style="left:263px;top:700px" width="17" height="16" viewBox="0 0 25 24" preserveAspectRatio="none"><use href="#prn"/></svg>
<svg class="a" style="left:286px;top:707px" width="7" height="4" viewBox="0 0 7 4" preserveAspectRatio="none"><use href="#darr"/></svg>
<div class="a" style="left:647px;top:698px;width:72px;height:21px;border:1px solid #d4d4d4;border-radius:4px;background:#fdfdfd"></div>
<div class="a" style="left:723px;top:698px;width:73px;height:21px;border:1px solid #d4d4d4;border-radius:4px;background:#fdfdfd"></div>
<svg class="a" style="left:659px;top:703px" width="14" height="11" viewBox="0 0 14 11"><path d="M1.5 5.5L5 9L12.5 2" fill="none" stroke="#48a848" stroke-width="2.2"/></svg>
<div class="t" style="left:687px;top:703px">OK</div>
<svg class="a" style="left:738px;top:702px" width="10" height="10" viewBox="0 0 10 10"><path d="M1.5 1.5L8.5 8.5M8.5 1.5L1.5 8.5" stroke="#e41818" stroke-width="2.2" stroke-linecap="round"/></svg>
<div class="t" style="left:755px;top:703px">Storno</div>
<!-- annotations -->
<div class="a" style="left:43px;top:343px;width:203px;height:28px;border:5px solid #fb7f25"></div>
<div class="a" style="left:7px;top:383px;width:67px;height:23px;border:3px solid #fb7f25"></div>
<div class="a" style="left:7px;top:601px;width:85px;height:22px;border:3px solid #fb7f25"></div>
<div class="t num" style="left:38px;top:328px">1.</div>
<div class="t num" style="left:9px;top:363px">2.</div>
<div class="t num" style="left:4px;top:587px">3.</div>
</body></html>
